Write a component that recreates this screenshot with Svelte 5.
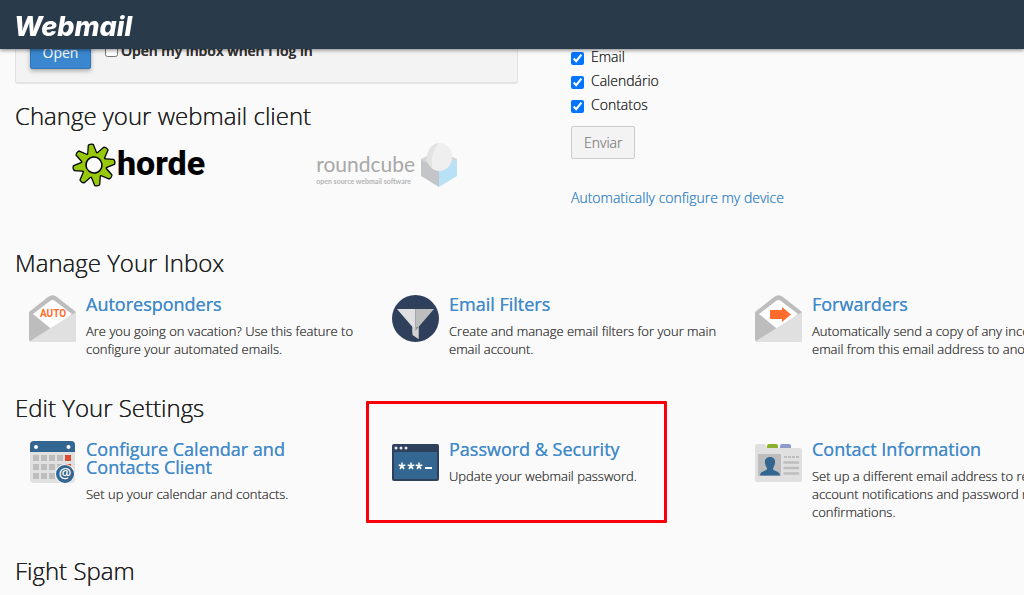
<script lang="ts">
	let autoOpen = $state(false);

	let options = $state([
		{ id: 'email', label: 'Email', checked: true },
		{ id: 'calendar', label: 'Calendário', checked: true },
		{ id: 'contacts', label: 'Contatos', checked: true }
	]);

	const sections = [
		{
			title: 'Manage Your Inbox',
			items: [
				{
					icon: 'auto',
					name: 'Autoresponders',
					text: 'Are you going on vacation? Use this feature to configure your automated emails.'
				},
				{
					icon: 'filter',
					name: 'Email Filters',
					text: 'Create and manage email filters for your main email account.'
				},
				{
					icon: 'forward',
					name: 'Forwarders',
					text: 'Automatically send a copy of any incoming email from this email address to another.'
				}
			]
		},
		{
			title: 'Edit Your Settings',
			items: [
				{
					icon: 'calendar',
					name: 'Configure Calendar and Contacts Client',
					text: 'Set up your calendar and contacts.'
				},
				{
					icon: 'password',
					name: 'Password & Security',
					text: 'Update your webmail password.',
					marked: true
				},
				{
					icon: 'contact',
					name: 'Contact Information',
					text: 'Set up a different email address to receive account notifications and password reset confirmations.'
				}
			]
		},
		{ title: 'Fight Spam', items: [] }
	];

	const teeth = [0, 45, 90, 135, 180, 225, 270, 315];
</script>

{#snippet envelope()}
	<path d="M0 17 L19 2 Q23.500 -1.500 28 2 L47 17 V44 Q47 47 44 47 H3 Q0 47 0 44 Z" fill="#bdbdbd" />
	<path d="M4 19 L21 6 Q23.500 4 26 6 L43 19 L23.500 35 Z" fill="#fff" />
	<path d="M47 17 V44 Q47 47 44 47 H3 Q1.500 47 1 46 Z" fill="#e0e0e0" />
{/snippet}

{#snippet gear()}
	{#each teeth as angle}
		<path d="M-4.500 -9 L-2 -20 Q0 -21 2 -20 L4.500 -9 Z" transform="rotate({angle})" />
	{/each}
	<circle r="12" />
{/snippet}

<header>
	<a class="brand" href="#home">Webmail</a>
</header>

<main>
	<div class="top">
		<div class="left">
			<div class="panel">
				<button class="open" type="button">Open</button>
				<label class="auto">
					<input type="checkbox" bind:checked={autoOpen} />
					<strong>Open my inbox when I log in</strong>
				</label>
			</div>

			<h2>Change your webmail client</h2>
			<div class="clients">
				<a class="horde" href="#horde">
					<svg width="44" height="44" viewBox="-22 -22 44 44" aria-hidden="true">
						<g transform="rotate(-9)">
							<g fill="#000" stroke="#000" stroke-width="2.500" stroke-linejoin="round">
								{@render gear()}
							</g>
							<g fill="#98c80c">
								{@render gear()}
							</g>
							<circle r="8" fill="#fafafa" stroke="#000" stroke-width="1.500" />
						</g>
					</svg>
					<span>horde</span>
				</a>
				<a class="roundcube" href="#roundcube">
					<span class="words">
						<span class="name">roundcube</span>
						<span class="tagline">open source webmail software</span>
					</span>
					<svg width="38" height="46" viewBox="0 0 38 46" aria-hidden="true">
						<path d="M1 17 L19 8 L37 17 L19 32 Z" fill="#d5d8da" />
						<path d="M1 17 L19 29 V45 L1 34 Z" fill="#c3c5c8" />
						<path d="M37 17 L19 29 V45 L37 34 Z" fill="#b9e1f6" />
						<ellipse cx="19.500" cy="15" rx="12.500" ry="14" fill="#efefef" />
						<path d="M19 1 A12.500 14 0 0 0 12 26 Q10 11 19 1 Z" fill="#e3e3e3" />
					</svg>
				</a>
			</div>
		</div>

		<form class="device" onsubmit={(e) => e.preventDefault()}>
			{#each options as option}
				<label>
					<input type="checkbox" name={option.id} bind:checked={option.checked} />
					{option.label}
				</label>
			{/each}
			<button class="send" type="submit">Enviar</button>
			<a href="#device">Automatically configure my device</a>
		</form>
	</div>

	{#each sections as section}
		<section>
			<h2>{section.title}</h2>
			<div class="items">
				{#each section.items as item}
					<div class="item">
						<svg width="47" height="47" viewBox="0 0 47 47" aria-hidden="true">
							{#if item.icon === 'auto'}
								{@render envelope()}
								<text x="24" y="22" text-anchor="middle" class="auto-text">AUTO</text>
							{:else if item.icon === 'forward'}
								{@render envelope()}
								<path d="M15 15 H27 V12 L36 19.500 L27 27 V24 H15 Z" fill="#ff6c2c" />
							{:else if item.icon === 'filter'}
								<circle cx="23.500" cy="23.500" r="23.500" fill="#2f405c" />
								<path d="M5 14 H23.500 V40 L20.500 38 V32 Z" fill="#e0e0e0" />
								<path d="M23.500 14 H42 L26.500 32 V44 L23.500 41 Z" fill="#bdbdbd" />
								<path d="M20.500 32 H26.500 V44 L20.500 40 Z" fill="#d3d3d3" />
								<path d="M23.500 32 H26.500 L23.500 36 Z" fill="#919191" />
							{:else if item.icon === 'calendar'}
								<rect x="1" y="1" width="45" height="42" rx="4" fill="#e0e0e0" />
								<path d="M1 12 V5 Q1 1 5 1 H42 Q46 1 46 5 V12 Z" fill="#336690" />
								<circle cx="7" cy="7" r="2" fill="#fff" />
								<circle cx="39.500" cy="7" r="2" fill="#fff" />
								{#each [15, 24, 33] as y}
									{#each [4, 12, 20, 28, 36] as x}
										<rect {x} {y} width="6" height="6" fill={x === 36 && y < 30 ? '#dc4b32' : '#bdbdbd'} />
									{/each}
								{/each}
								<circle cx="36" cy="34" r="10" fill="#f4f4f4" />
								<circle cx="36" cy="34" r="9" fill="#336690" />
								<text x="36" y="38" text-anchor="middle" class="at-text">@</text>
							{:else if item.icon === 'password'}
								<rect x="0" y="4" width="47" height="37" rx="2" fill="#2f405c" />
								<rect x="2" y="12" width="43" height="27" fill="#336690" />
								<circle cx="4" cy="8" r="1.500" fill="#e8e8e8" />
								<circle cx="9" cy="8" r="1.500" fill="#e8e8e8" />
								<circle cx="14" cy="8" r="1.500" fill="#e8e8e8" />
								{#each [10, 19, 27] as x}
									<path
										d="M0 -3.500 V0 M0 0 L3.300 -1 M0 0 L-3.300 -1 M0 0 L2 3 M0 0 L-2 3"
										transform="translate({x} 26)"
										stroke="#fff"
										stroke-width="1.500"
									/>
								{/each}
								<path d="M33 28 H40" stroke="#fff" stroke-width="2" />
							{:else}
								<path d="M0 6 Q0 4 2 4 H10 L12 8 H45 Q47 8 47 10 V40 Q47 42 45 42 H2 Q0 42 0 40 Z" fill="#e0e0e0" />
								<path d="M12 8 V6 Q12 4 14 4 H21 Q23 4 23 6 V8 Z" fill="#8bb02c" />
								<path d="M25 8 V6 Q25 4 27 4 H34 Q36 4 36 6 V8 Z" fill="#8c9bc9" />
								<rect x="3" y="14" width="23" height="22" fill="#bdbdbd" />
								<path
									d="M15 17 C19 17 20.500 20 20 23 C19.700 26 18 27 18 29 C18 31 25 31 25 35.500 H5 C5 31 12 31 12 29 C12 27 10.300 26 10 23 C9.500 20 11 17 15 17 Z"
									fill="#336690"
								/>
								<path d="M29 17 H45" stroke="#bdbdbd" stroke-width="2" stroke-dasharray="3 1" />
								<path
									d="M29.500 22.500 H43 M29.500 28 H43 M29.500 33.500 H43"
									stroke="#bdbdbd"
									stroke-width="2.500"
									stroke-linecap="round"
								/>
							{/if}
						</svg>
						<div class="body">
							<h3><a href="#{item.icon}">{item.name}</a></h3>
							<p>{item.text}</p>
						</div>
						{#if item.marked}
							<span class="mark"></span>
						{/if}
					</div>
				{/each}
			</div>
		</section>
	{/each}
</main>

<style>
	:global(body) {
		background: #fafafa;
		overflow: hidden;
	}

	header,
	main {
		font-family: 'Open Sans', 'Noto Sans', sans-serif;
		font-size: 14px;
		font-weight: 300;
		color: #333;
	}

	/* the light weight is too faint on its own at small sizes */
	main {
		padding-left: 15px;
		text-shadow: 0 0 0 currentColor;
	}

	header {
		position: fixed;
		inset: 0 0 auto;
		z-index: 10;
		display: flex;
		align-items: center;
		height: 49px;
		padding: 4px 14px 0;
		box-sizing: border-box;
		background: #293a4a;
		box-shadow: 0 1px 4px rgba(0, 0, 0, 0.5);
	}

	.brand {
		font-family: Inter, sans-serif;
		font-size: 27px;
		font-weight: 800;
		font-style: italic;
		color: #fff;
	}

	a {
		color: #428bca;
		text-decoration: none;
	}

	.top {
		display: grid;
		grid-template-columns: minmax(0, 503px) 1fr;
		column-gap: 53px;
	}

	.panel {
		display: flex;
		align-items: flex-end;
		gap: 14px;
		height: 84px;
		padding: 0 14px 13px;
		box-sizing: border-box;
		background: #f3f3f3;
		border: 1px solid #e3e3e3;
		border-bottom-width: 2px;
		border-radius: 3px;
	}

	.open {
		width: 61px;
		height: 34px;
		padding: 0;
		font: inherit;
		font-weight: 400;
		color: #fff;
		background: #3a87cf;
		border: 1px solid #2f75b8;
		border-radius: 2px;
		box-shadow: 0 2px 4px rgba(0, 0, 0, 0.3);
	}

	.auto {
		display: flex;
		align-items: center;
		gap: 3px;
		height: 34px;
	}

	.auto input {
		margin-bottom: 4px;
	}

	strong {
		font-weight: 600;
		line-height: 20px;
		padding-bottom: 2px;
	}

	input {
		width: 13px;
		height: 13px;
		margin: 0;
	}

	h2 {
		margin: 0;
		font-size: 24px;
		line-height: 32px;
		font-weight: 300;
		color: #222;
	}

	.left h2 {
		margin-top: 16px;
	}

	.clients {
		display: flex;
		gap: 111px;
		padding: 10px 0 0 57px;
	}

	.horde,
	.roundcube {
		display: flex;
		align-items: center;
		height: 46px;
		text-shadow: none;
	}

	.horde {
		gap: 1px;
		font-family: Roboto, sans-serif;
		font-size: 34px;
		font-weight: 800;
		line-height: 40px;
		color: #000;
	}

	.horde span {
		padding-bottom: 4px;
	}

	.roundcube {
		gap: 5px;
		font-family: Lato, sans-serif;
		color: #a8a8a8;
	}

	.words {
		display: flex;
		flex-direction: column;
		padding-top: 8px;
	}

	.name {
		font-size: 21px;
		line-height: 24px;
		font-weight: 400;
	}

	.tagline {
		font-size: 7px;
		line-height: 10px;
		font-weight: 700;
		color: #b5b5b5;
	}

	.device {
		display: flex;
		flex-direction: column;
		align-items: flex-start;
		gap: 4px;
		padding-top: 47px;
	}

	.device label {
		display: flex;
		align-items: center;
		gap: 7px;
		line-height: 20px;
		color: #333;
	}

	.device input {
		margin-top: 3px;
	}

	.send {
		height: 33px;
		margin: 7px 0 25px;
		padding: 0 12px;
		font: inherit;
		color: #8c8c8c;
		text-shadow: inherit;
		background: #f3f3f3;
		border: 1px solid #ccc;
		border-radius: 2px;
	}

	section {
		padding-top: 24px;
	}

	.top + section {
		padding-top: 40px;
	}

	/* columns keep their width on narrow windows and run off the right edge */
	.items {
		display: grid;
		grid-template-columns: repeat(3, minmax(363px, 1fr));
		padding-top: 16px;
	}

	.item {
		position: relative;
		display: flex;
		align-items: flex-start;
		gap: 10px;
		padding: 0 20px 10px 14px;
	}

	.item svg {
		flex: none;
		text-shadow: none;
	}

	h3 {
		margin: 0;
		font-size: 18px;
		line-height: 18px;
		font-weight: 500;
	}

	p {
		margin: 9px 0 0;
		font-size: 13px;
		line-height: 18px;
		color: #444;
	}

	.auto-text {
		font-family: Roboto, sans-serif;
		font-size: 10px;
		font-weight: 700;
		fill: #ff6c2c;
	}

	.at-text {
		font-size: 14px;
		font-weight: 600;
		fill: #fff;
	}

	.mark {
		position: absolute;
		inset: -39px 74px 8px -12px;
		border: 3px solid #f8000a;
		border-radius: 1px;
	}
</style>
